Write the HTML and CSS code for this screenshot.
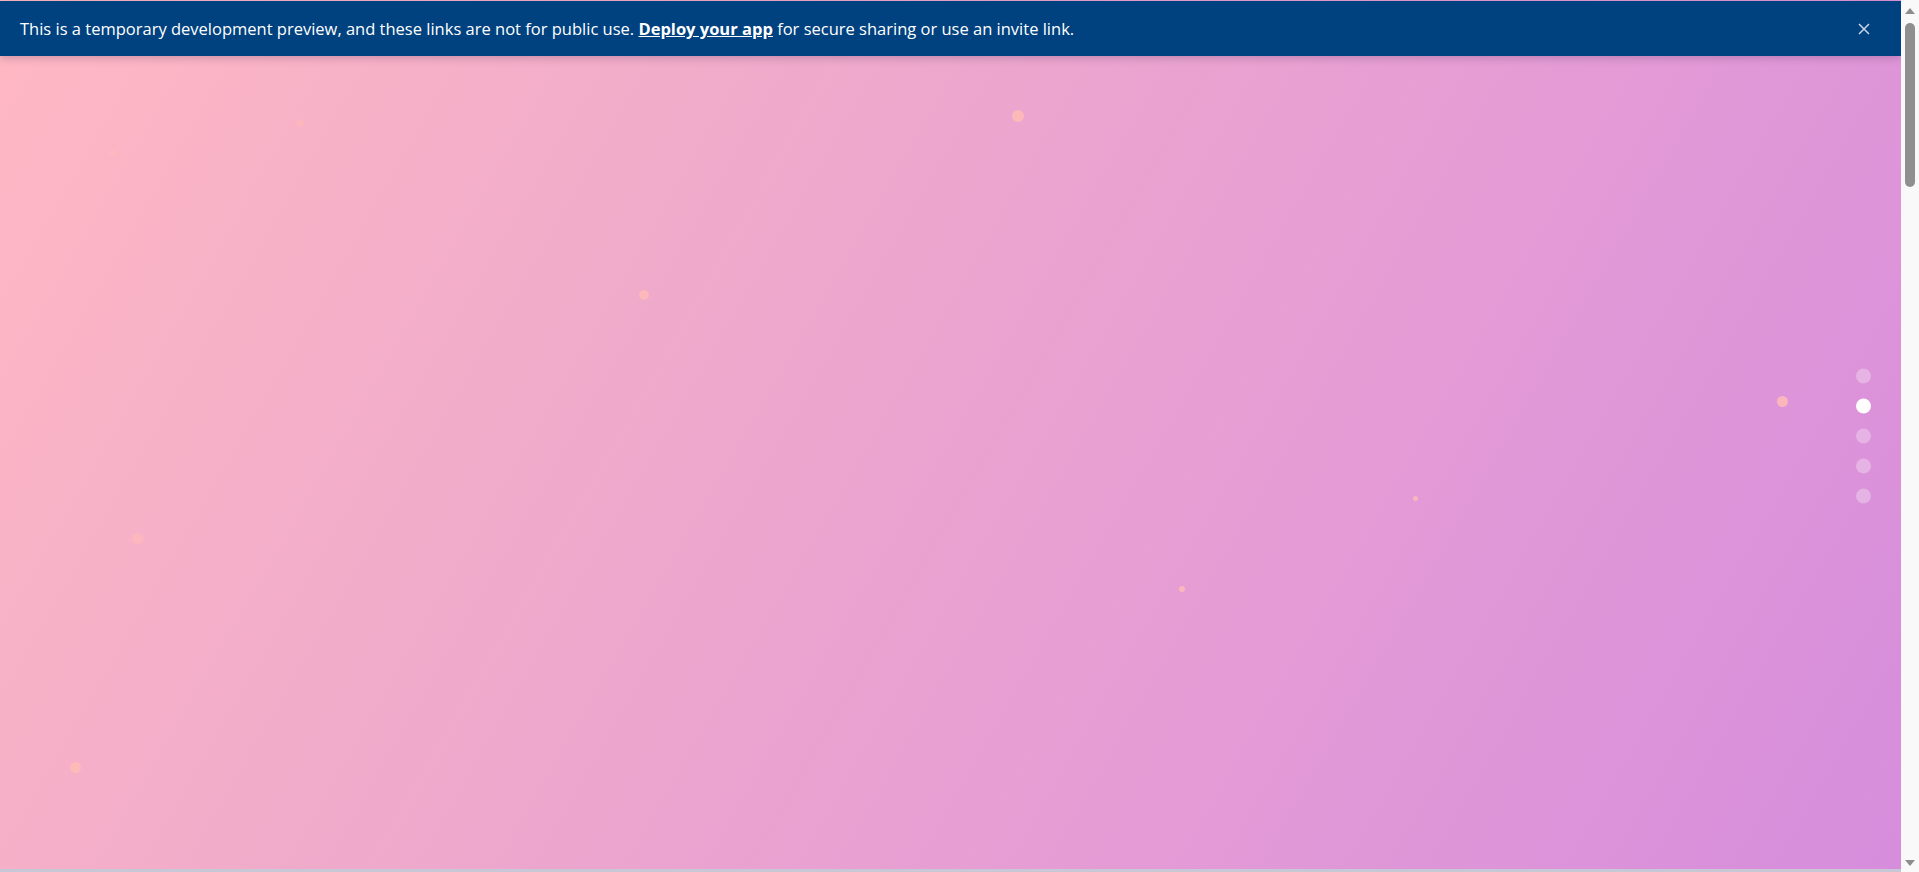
FILE: index.html
```html
<!DOCTYPE html>
<html lang="en">
<head>
<meta charset="utf-8">
<title>Preview</title>
<link rel="stylesheet" href="styles.css">
</head>
<body>
<div class="window">
  <main class="stage">
    <div class="banner">
      <p class="banner-text">This is a temporary development preview, and these links are not for public use. <a class="banner-link" href="#">Deploy your app</a> for secure sharing or use an invite link.</p>
      <button class="banner-close" aria-label="Close">
        <svg width="12" height="12" viewBox="0 0 12 12"><path d="M1 1 L11 11 M11 1 L1 11" stroke="#c9d6e6" stroke-width="1.5" fill="none"/></svg>
      </button>
    </div>
    <div class="particles">
      <span class="particle" style="left:1012px;top:110px;width:12px;height:12px;opacity:.85"></span>
      <span class="particle" style="left:296px;top:119px;width:8px;height:8px;opacity:.5"></span>
      <span class="particle" style="left:109px;top:149px;width:8px;height:8px;opacity:.35"></span>
      <span class="particle" style="left:639px;top:290px;width:10px;height:10px;opacity:.8"></span>
      <span class="particle" style="left:1777px;top:396px;width:11px;height:11px;opacity:.85"></span>
      <span class="particle" style="left:1413px;top:496px;width:5px;height:5px;opacity:.8"></span>
      <span class="particle" style="left:132px;top:533px;width:11px;height:11px;opacity:.6"></span>
      <span class="particle" style="left:1179px;top:586px;width:6px;height:6px;opacity:.85"></span>
      <span class="particle" style="left:70px;top:762px;width:11px;height:11px;opacity:.85"></span>
    </div>
    <nav class="dots">
      <span class="dot"></span>
      <span class="dot active"></span>
      <span class="dot"></span>
      <span class="dot"></span>
      <span class="dot"></span>
    </nav>
    <div class="bottom-line"></div>
  </main>
  <div class="scrollbar">
    <div class="arrow up"></div>
    <div class="track"><div class="thumb"></div></div>
    <div class="arrow down"></div>
  </div>
</div>
</body>
</html>
```
FILE: styles.css
```css
html, body {
  margin: 0;
  padding: 0;
  height: 100%;
  overflow: hidden;
}
body {
  font-family: "Open Sans", "Noto Sans", "Liberation Sans", sans-serif;
}
.window {
  display: flex;
  width: 1919px;
  height: 872px;
}
.stage {
  position: relative;
  flex: 1;
  height: 100%;
  overflow: hidden;
  background: linear-gradient(120deg, #ffb8c3 0%, #efaacb 35%, #e39ad6 70%, #d68ddc 100%);
}
.banner {
  position: relative;
  z-index: 2;
  margin-top: 1px;
  height: 55px;
  background: #00417f;
  display: flex;
  align-items: center;
  justify-content: space-between;
  padding: 0 30px 0 20px;
  box-shadow: 0 2px 8px rgba(60, 40, 80, 0.25);
}
.banner-text {
  margin: 0;
  color: #ffffff;
  font-size: 16.5px;
  letter-spacing: 0;
}
.banner-link {
  color: #ffffff;
  font-weight: 700;
  text-decoration: underline;
}
.banner-close {
  background: none;
  border: 0;
  padding: 0;
  width: 14px;
  height: 14px;
  display: flex;
  align-items: center;
  justify-content: center;
  cursor: pointer;
}
.particle {
  position: absolute;
  border-radius: 50%;
  background: #ffbcb6;
}
.dots {
  position: absolute;
  right: 30px;
  top: 50%;
  transform: translateY(-50%);
  display: flex;
  flex-direction: column;
  gap: 15px;
}
.dot {
  width: 15px;
  height: 15px;
  border-radius: 50%;
  background: rgba(255, 255, 255, 0.3);
}
.dot.active {
  background: #ffffff;
}
.bottom-line {
  position: absolute;
  left: 0;
  right: 0;
  bottom: 0;
  height: 3px;
  background: #c7c7d6;
}
.scrollbar {
  width: 18px;
  height: 100%;
  background: #f9f9f9;
  display: flex;
  flex-direction: column;
  align-items: center;
}
.arrow {
  width: 0;
  height: 0;
  border-left: 5px solid transparent;
  border-right: 5px solid transparent;
}
.arrow.up {
  margin-top: 8px;
  border-bottom: 6px solid #8d8d8d;
}
.arrow.down {
  margin-bottom: 6px;
  border-top: 6px solid #8d8d8d;
}
.track {
  flex: 1;
  width: 100%;
  display: flex;
  justify-content: center;
  padding-top: 9px;
}
.thumb {
  width: 10px;
  height: 164px;
  border-radius: 5px;
  background: #8f8f8f;
}
```
